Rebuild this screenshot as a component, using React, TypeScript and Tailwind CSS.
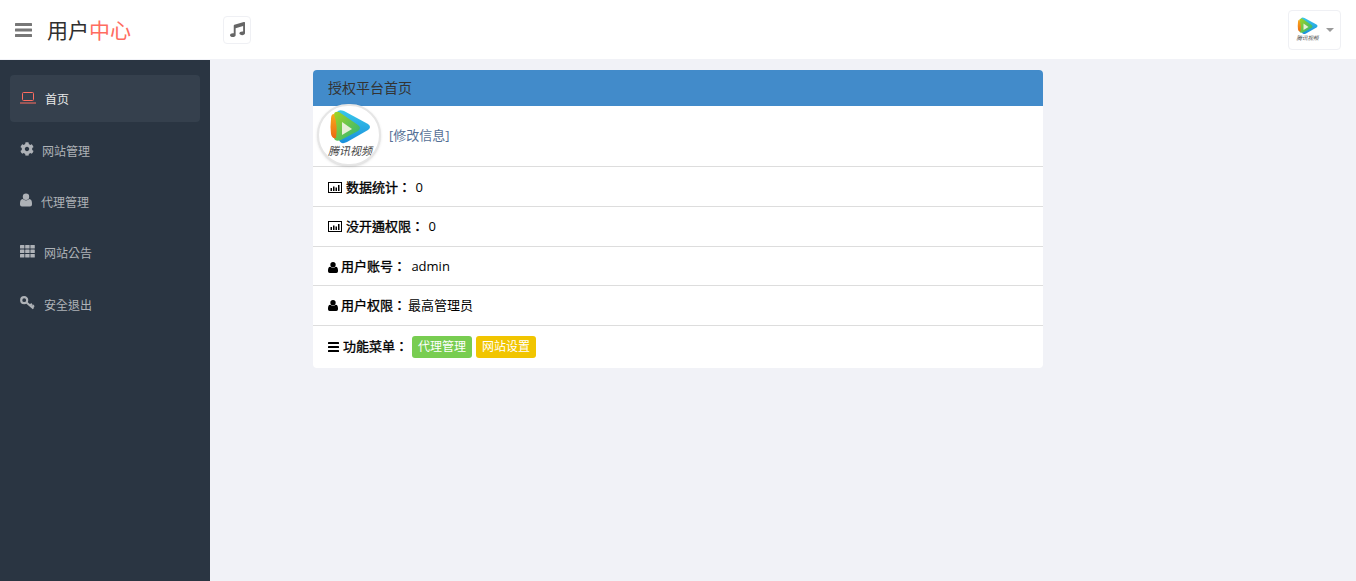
import React from "react";
import { FaMusic, FaCog } from "react-icons/fa";

const font = { fontFamily: '"Open Sans","Noto Sans CJK TC",sans-serif' };

function Logo({ size, uid, vb }: { size: number; uid: string; vb: string }) {
  return (
    <svg width={size} height={size} viewBox={vb} className="block shrink-0">
      <defs>
        <linearGradient id={`b${uid}`} x1="0" y1="0" x2="0" y2="1">
          <stop offset="0" stopColor="#38c8ea" />
          <stop offset="1" stopColor="#1a8fdc" />
        </linearGradient>
        <linearGradient id={`g${uid}`} x1="0" y1="0" x2="1" y2="1">
          <stop offset="0" stopColor="#a5d420" />
          <stop offset="1" stopColor="#27b57c" />
        </linearGradient>
        <linearGradient id={`o${uid}`} x1="0" y1="0" x2="0" y2="1">
          <stop offset="0" stopColor="#f8ab1c" />
          <stop offset="1" stopColor="#ec6a12" />
        </linearGradient>
      </defs>
      <path d="M20 9 Q22 6 27 8 L51 21 Q55 24 51 27 L30 39 Q24 42 22 37 Z" fill={`url(#b${uid})`} />
      <path d="M17 12 Q17 8 22 9 L41 22 Q45 25 41 28 L24 37 Q18 39 17 35 Z" fill={`url(#g${uid})`} />
      <path d="M17 11 Q14 11 14 16 Q13 24 14 31 Q15 36 19 35 Q21 23 17 11 Z" fill={`url(#o${uid})`} />
      <path d="M25 19 L35 26 L25 32 Z" fill="#e6efd6" />
      <text x="33" y="52" textAnchor="middle" fontSize="11" fontStyle="italic" fill="#444" style={{ fontFamily: '"Noto Sans CJK SC",sans-serif' }}>
        腾讯视频
      </text>
    </svg>
  );
}

function BarChart() {
  return (
    <svg width="14" height="11" viewBox="0 0 14 11" className="shrink-0">
      <rect x="0.5" y="0.5" width="13" height="10" fill="none" stroke="#000" />
      <rect x="2.5" y="6" width="1.5" height="3" />
      <rect x="5" y="4.5" width="1.5" height="4.5" />
      <rect x="7.5" y="5.5" width="1.5" height="3.5" />
      <rect x="10" y="3" width="1.5" height="6" />
    </svg>
  );
}

function Bars({ w, h, bar, step }: { w: number; h: number; bar: number; step: number }) {
  return (
    <svg width={w} height={h} viewBox={`0 0 ${w} ${h}`} fill="currentColor" className="shrink-0">
      <rect y="0" width={w} height={bar} rx="0.5" />
      <rect y={step} width={w} height={bar} rx="0.5" />
      <rect y={step * 2} width={w} height={bar} rx="0.5" />
    </svg>
  );
}

function User({ w, h }: { w: number; h: number }) {
  return (
    <svg width={w} height={h} viewBox="0 0 12 13" fill="currentColor" className="shrink-0">
      <circle cx="6" cy="3.2" r="3.2" />
      <path d="M2.6 5.6 Q6 8.4 9.4 5.6 Q12 6 12 10 V11 Q12 13 10 13 H2 Q0 13 0 11 V10 Q0 6 2.6 5.6 Z" />
    </svg>
  );
}

function Th() {
  return (
    <svg width="15" height="13" viewBox="0 0 15 13" fill="currentColor" className="shrink-0">
      {[0, 4.5, 9].map((y) =>
        [0, 5.2, 10.4].map((x) => <rect key={`${x}-${y}`} x={x} y={y} width="4.4" height="3.6" rx="0.5" />)
      )}
    </svg>
  );
}

function Key() {
  return (
    <svg width="15" height="14" viewBox="0 0 15 14" fill="none" stroke="currentColor" className="shrink-0">
      <circle cx="4.2" cy="4.2" r="3" strokeWidth="2.2" />
      <path d="M6.5 6.5 L13.5 12.5 M10 9.5 L12 7.8 M12 11 L14 9.4" strokeWidth="2.2" />
    </svg>
  );
}

function NavItem({ icon, label, gap, h }: { icon: React.ReactNode; label: string; gap: string; h: string }) {
  return (
    <div className={`flex items-center pl-[20px] text-[12px] text-[#aeb2b7] ${h} ${gap}`}>
      <span className="-mt-[4px] flex">{icon}</span>
      <span className="mt-[2px]">{label}</span>
    </div>
  );
}

function Row({ children, h, pt }: { children: React.ReactNode; h: string; pt?: string }) {
  return <div className={`flex items-center whitespace-pre px-[15px] border-b border-[#dddddd] text-[13px] text-black ${h} ${pt ?? ""}`}>{children}</div>;
}

const strong = "[-webkit-text-stroke:0.35px_#000]";

export default function App() {
  return (
    <div className="h-[581px] w-[1356px] overflow-hidden flex flex-col bg-[#f1f2f7]" style={font}>
      <header className="h-[60px] shrink-0 bg-white flex items-center border-b border-[#f1f2f7]">
        <div className="w-[223px] flex items-center pl-[15px] shrink-0">
          <span className="text-[#777] flex mt-[1px]">
            <Bars w={17} h={14} bar={3} step={5.5} />
          </span>
          <div className="ml-[15px] text-[21px] text-[#2f2f2f] leading-none mt-[1px]">
            用户<span className="text-[#ff6c60]">中心</span>
          </div>
        </div>
        <div className="w-[28px] h-[28px] rounded border border-[#eff0f4] flex items-center justify-center">
          <FaMusic className="text-[#666] w-[15px] h-[15px]" />
        </div>
        <div className="ml-auto mr-[15px] w-[53px] h-[40px] rounded border border-[#eff0f4] flex items-center pl-[2px] gap-[5px]">
          <Logo size={30} uid="s" vb="0 2 60 60" />
          <span className="w-0 h-0 border-x-[4px] border-x-transparent border-t-[4px] border-t-[#9a9a9a] mt-px" />
        </div>
      </header>

      <div className="flex flex-1 min-h-0">
        <aside className="w-[210px] shrink-0 bg-[#2a3542] pt-[15px]">
          <div className="mx-[10px] h-[47px] rounded bg-[#35404d] flex items-center pl-[10px] text-[12px] text-[#e8e8e8]">
            <svg width="16" height="12" viewBox="0 0 16 12" fill="none" stroke="#ff6c60" className="mr-[9px] mb-[2px]">
              <rect x="2.5" y="0.5" width="11" height="8" rx="1" />
              <path d="M0 11h16" />
            </svg>
            <span className="mt-[2px]">首页</span>
          </div>
          <div className="h-[3px]" />
          <NavItem icon={<FaCog className="w-[14px] h-[14px]" />} label="网站管理" gap="gap-[8px]" h="h-[51px]" />
          <NavItem icon={<User w={12} h={14} />} label="代理管理" gap="gap-[9px]" h="h-[51px]" />
          <NavItem icon={<Th />} label="网站公告" gap="gap-[9px]" h="h-[52px]" />
          <NavItem icon={<Key />} label="安全退出" gap="gap-[9px]" h="h-[51px]" />
        </aside>

        <main className="flex-1 pl-[103px] pt-[10px]">
          <div className="w-[730px] rounded bg-white overflow-hidden">
            <div className="h-[36px] bg-[#428bca] flex items-center px-[15px] pb-[2px] text-[14px] text-[#333]">授权平台首页</div>
            <div className="h-[61px] flex items-center pl-[4px] border-b border-[#dddddd]">
              <div className="w-[64px] h-[62px] rounded-full border-2 border-[#e6e6e6] overflow-hidden bg-white flex items-center justify-center shrink-0 -mt-[2px] shadow-sm">
                <Logo size={60} uid="b" vb="2 2 60 60" />
              </div>
              <span className="ml-[8px] text-[13px] text-[#567096]">[修改信息]</span>
            </div>
            <Row h="h-[40px]" pt="pt-[2px]">
              <BarChart />
              <span className={`ml-[4px] ${strong}`}>数据统计：</span>
              <span className="ml-[1px]"> 0</span>
            </Row>
            <Row h="h-[40px]">
              <BarChart />
              <span className={`ml-[4px] ${strong}`}>没开通权限：</span>
              <span className="ml-[1px]"> 0</span>
            </Row>
            <Row h="h-[39px]" pt="pt-[2px]">
              <User w={10} h={11} />
              <span className={`ml-[3px] ${strong}`}>用户账号：</span>
              <span className="ml-[2px]"> admin</span>
            </Row>
            <Row h="h-[40px]">
              <User w={10} h={11} />
              <span className={`ml-[3px] ${strong}`}>用户权限：</span>
              <span className="ml-[2px]">最高管理员</span>
            </Row>
            <div className="h-[42px] flex items-center px-[15px] text-[13px] text-black">
              <Bars w={11} h={10} bar={2} step={4} />
              <span className={`ml-[4px] ${strong}`}>功能菜单：</span>
              <span className="ml-[4px] h-[22px] px-[6px] rounded-[3px] bg-[#78cd51] text-white text-[12px] flex items-center">代理管理</span>
              <span className="ml-[4px] h-[22px] px-[6px] rounded-[3px] bg-[#f1c500] text-white text-[12px] flex items-center">网站设置</span>
            </div>
          </div>
        </main>
      </div>
    </div>
  );
}
